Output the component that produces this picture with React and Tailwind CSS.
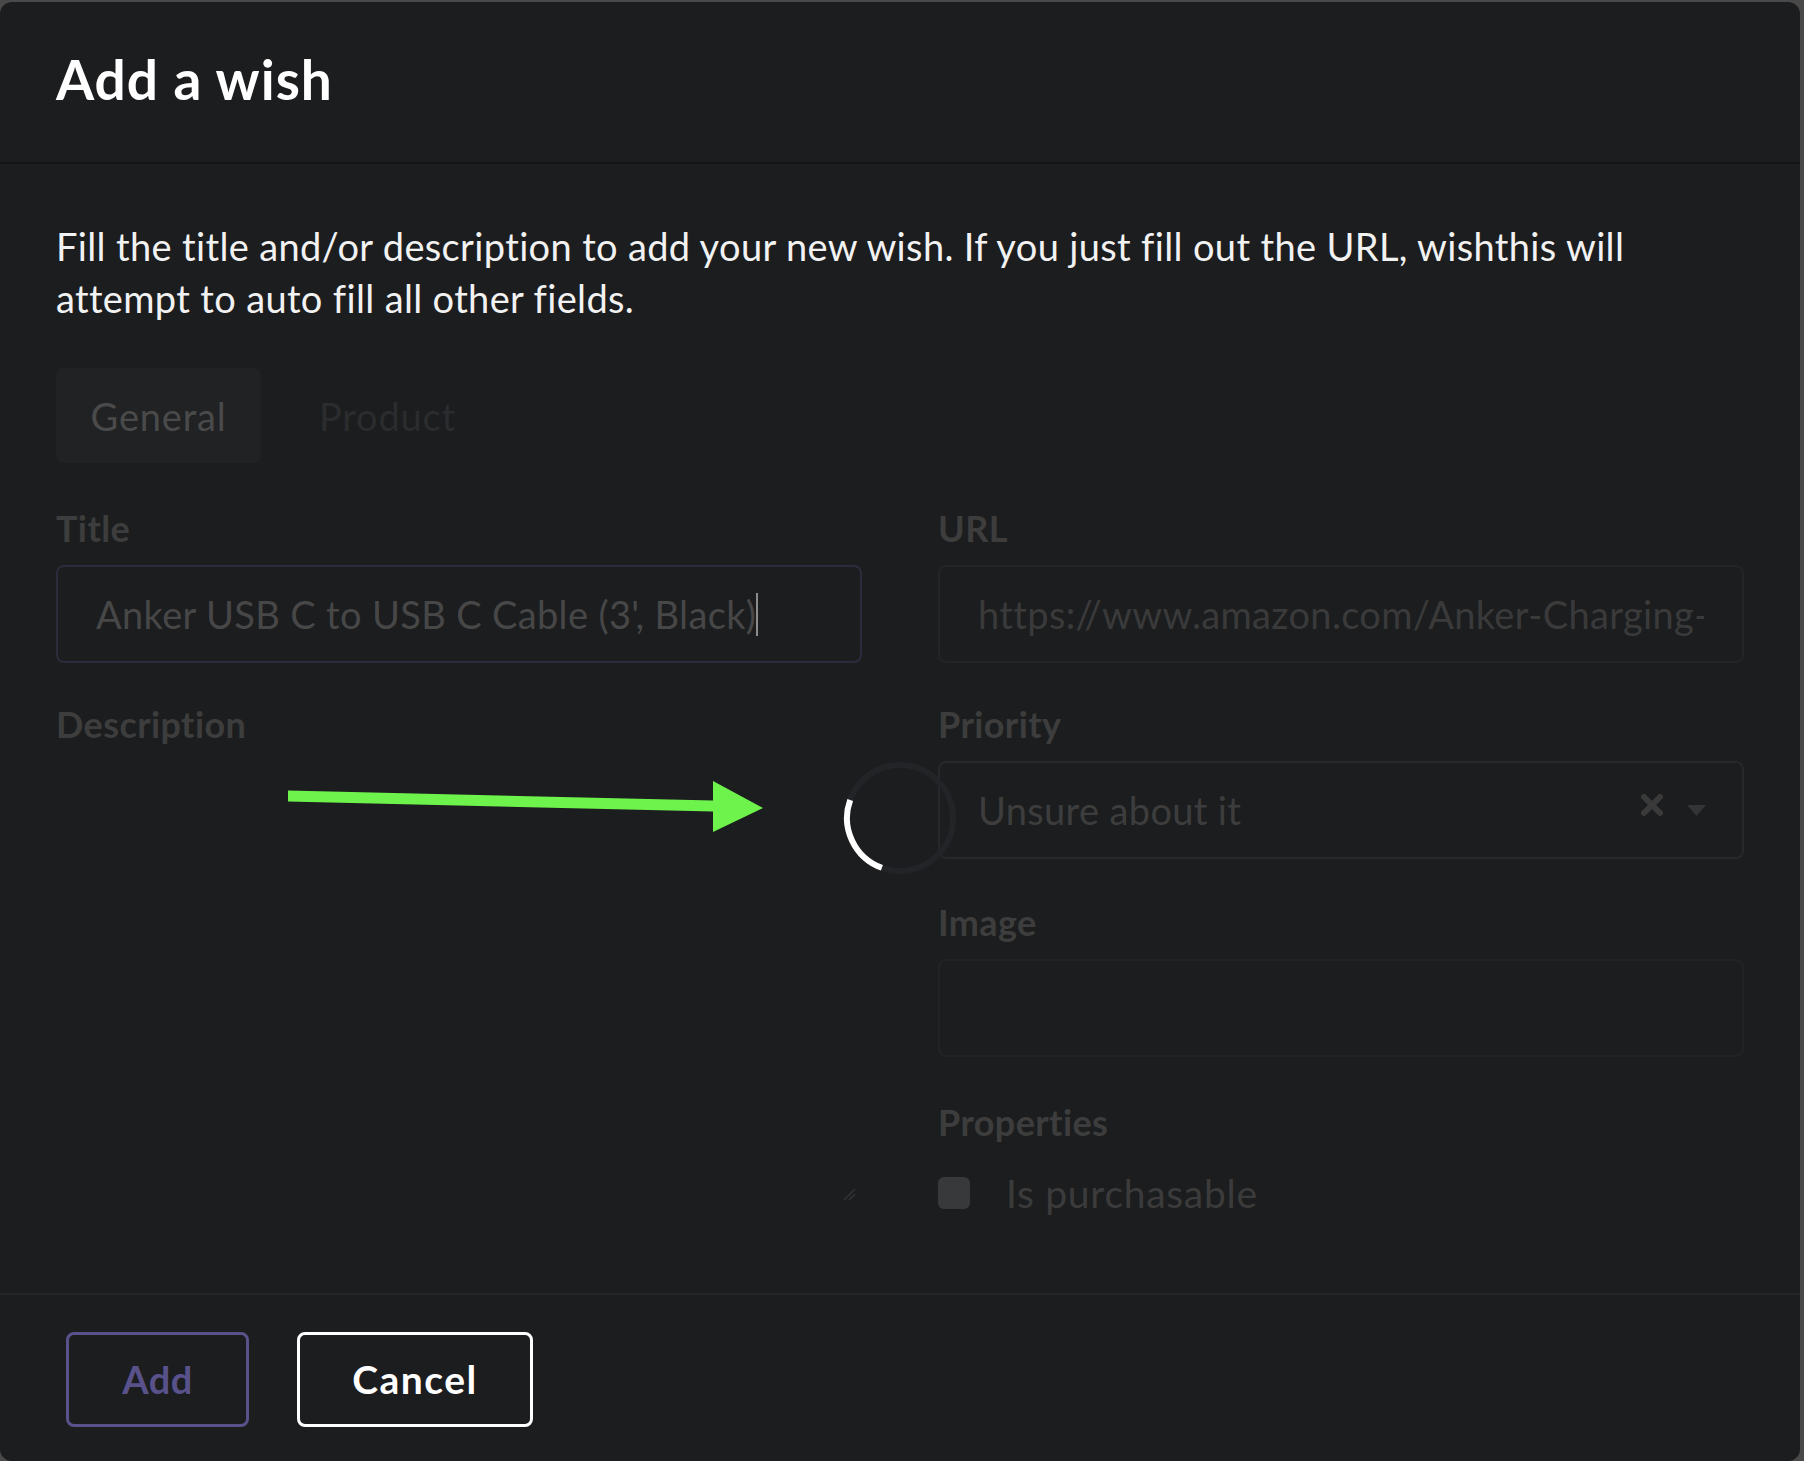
export default function App() {
  return (
    <div className="w-[1804px] h-[1461px] bg-[#494949] overflow-hidden pt-[2px] font-[Lato,sans-serif]">
      <div className="relative w-[1800px] h-[1459px] bg-[#1c1d1f] rounded-[12px] flex flex-col overflow-hidden">
        {/* Header */}
        <div className="h-[162px] shrink-0 border-b-2 border-[#131416] px-[56px] pt-[45px]">
          <h1 className="text-[55px] leading-[64px] font-bold tracking-[1px] text-white">Add a wish</h1>
        </div>

        {/* Content */}
        <div className="flex-1 px-[56px] pt-[56px]">
          <p className="text-[38px] leading-[52px] tracking-[0.35px] text-[#f2f2f2] whitespace-nowrap">
            Fill the title and/or description to add your new wish. If you just fill out the URL, wishthis will
            <br />
            attempt to auto fill all other fields.
          </p>

          {/* Tabs */}
          <div className="mt-[44px] flex items-center">
            <div className="w-[205px] h-[95px] rounded-[8px] bg-[#212224] flex items-center justify-center text-[38px] leading-[52px] tracking-[0.8px] text-[#4a4a4a]">
              General
            </div>
            <div className="ml-[58px] h-[95px] flex items-center text-[38px] leading-[52px] tracking-[0.8px] text-[#2b2c2e]">
              Product
            </div>
          </div>

          {/* Fields */}
          <div className="mt-[45px] grid grid-cols-2 gap-x-[76px]">
            {/* Left column */}
            <div className="flex flex-col">
              <div>
                <div className="text-[36px] leading-[40px] font-bold tracking-[0.4px] text-[#3d3d3d]">Title</div>
                <div className="mt-[17px] h-[98px] rounded-[8px] border-2 border-[#2c2b3b] flex items-center pl-[38px] text-[38px] leading-[52px] tracking-[0.35px] text-[#474747] whitespace-nowrap">
                  Anker USB C to USB C Cable (3', Black)
                  <span className="inline-block w-[2px] h-[43px] bg-[#8c8c8c]"></span>
                </div>
              </div>
              <div className="mt-[41px]">
                <div className="text-[36px] leading-[40px] font-bold tracking-[0.4px] text-[#3d3d3d]">Description</div>
                <div className="relative mt-[17px] h-[444px] rounded-[8px]">
                  <svg className="absolute right-[6px] bottom-[4px]" width="14" height="14" viewBox="0 0 14 14">
                    <line x1="2" y1="13" x2="13" y2="2" stroke="#353535" strokeWidth="1.5" />
                    <line x1="7" y1="13" x2="13" y2="7" stroke="#353535" strokeWidth="1.5" />
                  </svg>
                </div>
              </div>
            </div>

            {/* Right column */}
            <div className="flex flex-col">
              <div>
                <div className="text-[36px] leading-[40px] font-bold tracking-[0.4px] text-[#3d3d3d]">URL</div>
                <div className="mt-[17px] h-[98px] rounded-[8px] border-2 border-[#232427] flex items-center px-[38px]">
                  <div className="overflow-hidden whitespace-nowrap text-[38px] leading-[52px] tracking-[0.35px] text-[#3a3a3a]">
                    https://www.amazon.com/Anker-Charging-Cable-Compatible-Samsung/dp/B088NRLMPV
                  </div>
                </div>
              </div>
              <div className="mt-[41px]">
                <div className="text-[36px] leading-[40px] font-bold tracking-[0.4px] text-[#3d3d3d]">Priority</div>
                <div className="mt-[17px] h-[98px] rounded-[8px] border-2 border-[#27282a] flex items-center pl-[38px] pr-[36px]">
                  <div className="flex-1 text-[38px] leading-[52px] tracking-[0.35px] text-[#3d3d3d]">Unsure about it</div>
                  <svg width="22" height="22" viewBox="0 0 22 22" className="mr-[24px] -mt-[10px]">
                    <line x1="3" y1="3" x2="19" y2="19" stroke="#3a3a3a" strokeWidth="6" strokeLinecap="round" />
                    <line x1="19" y1="3" x2="3" y2="19" stroke="#3a3a3a" strokeWidth="6" strokeLinecap="round" />
                  </svg>
                  <svg width="19" height="11" viewBox="0 0 19 11">
                    <polygon points="0,0 19,0 9.5,11" fill="#333436" />
                  </svg>
                </div>
              </div>
              <div className="mt-[43px]">
                <div className="text-[36px] leading-[40px] font-bold tracking-[0.4px] text-[#3d3d3d]">Image</div>
                <div className="mt-[17px] h-[98px] rounded-[8px] border-2 border-[#222326]"></div>
              </div>
              <div className="mt-[45px]">
                <div className="text-[36px] leading-[40px] font-bold tracking-[0.4px] text-[#3d3d3d]">Properties</div>
                <div className="mt-[25px] flex items-center h-[52px]">
                  <div className="w-[32px] h-[32px] rounded-[6px] bg-[#38393b]"></div>
                  <div className="ml-[36px] text-[39px] leading-[52px] tracking-[0.7px] text-[#3b3b3b]">Is purchasable</div>
                </div>
              </div>
            </div>
          </div>
        </div>

        {/* Footer */}
        <div className="h-[168px] shrink-0 border-t-2 border-[#242528] pl-[66px] pt-[37px] flex items-start">
          <button className="w-[183px] h-[95px] rounded-[8px] border-[3px] border-[#58518a] text-[#58518a] text-[38px] tracking-[0.5px] font-bold flex items-center justify-center">
            Add
          </button>
          <button className="ml-[48px] w-[236px] h-[95px] rounded-[8px] border-[3px] border-white text-white text-[39px] tracking-[1.5px] font-bold flex items-center justify-center">
            Cancel
          </button>
        </div>

        {/* Annotation arrow */}
        <svg className="absolute left-[280px] top-[768px]" width="490" height="70" viewBox="0 0 490 70">
          <polygon points="8,20.5 433,30.5 433,41.5 8,31.5" fill="#6ef24c" />
          <polygon points="433,11 483,38 433,62" fill="#6ef24c" />
        </svg>

        {/* Loading spinner */}
        <svg className="absolute left-[840px] top-[756px]" width="120" height="120" viewBox="0 0 120 120">
          <circle cx="60" cy="60" r="53" fill="none" stroke="#232427" strokeWidth="6" />
          <path d="M 41.9 109.8 A 53 53 0 0 1 10.2 41.9" fill="none" stroke="#ffffff" strokeWidth="6" />
        </svg>
      </div>
    </div>
  );
}
